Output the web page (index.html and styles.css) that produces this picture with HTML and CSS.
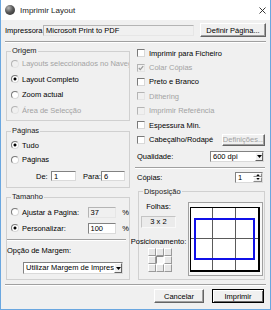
FILE: index.html
```html
<!DOCTYPE html>
<html lang="pt">
<head>
    <meta charset="UTF-8">
    <title>Imprimir Layout</title>
    <link rel="stylesheet" href="styles.css">
</head>
<body>
<div class="window">
    <!--barra de título-->
    <div class="titlebar">
        <span class="app-icon"></span>
        <span class="title">Imprimir Layout</span>
        <svg class="close" width="7" height="7" viewBox="0 0 7 7"><path d="M0.5 0.5L6.5 6.5M6.5 0.5L0.5 6.5" stroke="#222" stroke-width="0.9"/></svg>
    </div>

    <div class="content">
        <!--impressora-->
        <div class="printer-row">
            <span class="printer-label">Impressora</span>
            <span class="field off printer-name">Microsoft Print to PDF</span>
            <span class="btn setup-btn">Definir Página...</span>
        </div>
        <div class="sep"></div>

        <div class="columns">
            <!--coluna esquerda-->
            <div class="col-left">
                <fieldset class="group origem">
                    <legend>Origem</legend>
                    <div class="opt disabled"><span class="radio"></span>Layouts seleccionados no Navegador</div>
                    <div class="opt"><span class="radio on"></span>Layout Completo</div>
                    <div class="opt"><span class="radio"></span>Zoom actual</div>
                    <div class="opt disabled"><span class="radio"></span>Área de Selecção</div>
                </fieldset>

                <fieldset class="group paginas">
                    <legend>Páginas</legend>
                    <div class="opt"><span class="radio on"></span>Tudo</div>
                    <div class="opt"><span class="radio"></span>Páginas</div>
                    <div class="range-row">
                        <span class="range-label">De:</span>
                        <span class="field range-from">1</span>
                        <span class="range-label para">Para:</span>
                        <span class="field range-to">6</span>
                    </div>
                </fieldset>

                <fieldset class="group tamanho">
                    <legend>Tamanho</legend>
                    <div class="opt size-opt">
                        <span class="radio"></span><span class="size-label">Ajustar à Pagina:</span>
                        <span class="field off pct">37</span><span class="pct-sign">%</span>
                    </div>
                    <div class="opt size-opt">
                        <span class="radio on"></span><span class="size-label">Personalizar:</span>
                        <span class="field pct">100</span><span class="pct-sign">%</span>
                    </div>
                    <div class="sep inner-sep"></div>
                    <div class="margin-label">Opção de Margem:</div>
                    <div class="select margin-select">
                        <span class="select-val">Utilizar Margem de Impressora</span>
                        <span class="arrow"><svg width="5" height="3" viewBox="0 0 5 3"><polygon points="0,0 5,0 2.5,3" fill="#000"/></svg></span>
                    </div>
                </fieldset>
            </div>

            <!--coluna direita-->
            <div class="col-right">
                <div class="chk-row"><span class="check"></span>Imprimir para Ficheiro</div>
                <div class="chk-row disabled"><span class="check on"><svg width="6" height="6" viewBox="0 0 6 6"><path d="M0.8 3L2.3 4.6L5.2 1.2" stroke="#9a9a9a" stroke-width="1.2" fill="none"/></svg></span>Colar Cópias</div>
                <div class="chk-row"><span class="check"></span>Preto e Branco</div>
                <div class="chk-row disabled"><span class="check"></span>Dithering</div>
                <div class="chk-row disabled"><span class="check"></span>Imprimir Referência</div>
                <div class="chk-row"><span class="check"></span>Espessura Min.</div>
                <div class="chk-row"><span class="check"></span>Cabeçalho/Rodapé<span class="btn off defs-btn">Definições...</span></div>

                <div class="quality-row">
                    <span>Qualidade:</span>
                    <div class="select quality-select">
                        <span class="select-val">600 dpi</span>
                        <span class="arrow"><svg width="5" height="3" viewBox="0 0 5 3"><polygon points="0,0 5,0 2.5,3" fill="#000"/></svg></span>
                    </div>
                </div>
                <div class="sep right-sep"></div>

                <div class="copies-row">
                    <span>Cópias:</span>
                    <div class="spin">
                        <span class="spin-val">1</span>
                        <span class="spin-btns">
                            <span><svg width="5" height="3" viewBox="0 0 5 3"><polygon points="0,3 5,3 2.5,0" fill="#000"/></svg></span>
                            <span><svg width="5" height="3" viewBox="0 0 5 3"><polygon points="0,0 5,0 2.5,3" fill="#000"/></svg></span>
                        </span>
                    </div>
                </div>

                <fieldset class="group disposicao">
                    <legend>Disposição</legend>
                    <div class="layout">
                        <div class="layout-info">
                            <span class="sheets-label">Folhas:</span>
                            <span class="sheets-val">3 x 2</span>
                            <span class="pos-label">Posicionamento:</span>
                            <div class="pos-grid">
                                <span></span><span></span><span></span>
                                <span></span><span class="cur"></span><span></span>
                                <span></span><span></span><span></span>
                            </div>
                        </div>
                        <div class="preview">
                            <div class="page">
                                <span></span><span></span><span></span>
                                <span></span><span></span><span></span>
                                <div class="print-area"></div>
                            </div>
                        </div>
                    </div>
                </fieldset>
            </div>
        </div>

        <div class="sep bottom-sep"></div>
        <!--botões-->
        <div class="actions">
            <span class="btn action-btn">Cancelar</span>
            <span class="btn action-btn default">Imprimir</span>
        </div>
    </div>
</div>
</body>
</html>
```

FILE: styles.css
```css
*{
    margin: 0;
    padding: 0;
    box-sizing: border-box;
}
body{
    font-family: "Liberation Sans", Arial, sans-serif;
    font-size: 7.5px;
    color: #000;
    background: #fff;
}
.window{
    width: 271px;
    height: 310px;
    background: #f0f0f0;
    border: 1px solid #6aa7e0;
    border-top: none;
    display: flex;
    flex-direction: column;
}

/* barra de título */
.titlebar{
    height: 20px;
    background: #fff;
    display: flex;
    align-items: center;
    padding: 0 4px;
}
.app-icon{
    width: 10px;
    height: 10px;
    border-radius: 50%;
    background: radial-gradient(circle at 35% 30%, #b8b8b8 0, #5a5a5a 45%, #262626 100%);
    margin-top: -1px;
}
.title{
    font-size: 8px;
    margin-left: 5px;
    color: #1a1a1a;
}
.close{
    margin-left: auto;
}

.content{
    flex: 1;
    padding: 3px 4px 0 4px;
    display: flex;
    flex-direction: column;
}

/* controlos comuns */
.field{
    height: 11px;
    background: #fff;
    border: 1px solid;
    border-color: #828282 #dadada #dadada #828282;
    padding-left: 2px;
    line-height: 9px;
    white-space: nowrap;
    overflow: hidden;
}
.field.off{
    background: #f0f0f0;
    border-color: #b4b4b4 #e6e6e6 #e6e6e6 #b4b4b4;
}
.btn{
    display: flex;
    align-items: center;
    justify-content: center;
    background: #f0f0f0;
    border: 1px solid;
    border-color: #fff #646464 #646464 #fff;
    box-shadow: inset -1px -1px #a0a0a0;
    white-space: nowrap;
}
.btn.off{
    color: #a0a0a0;
}
.sep{
    border-top: 1px solid #a0a0a0;
    border-bottom: 1px solid #fff;
}
.select{
    height: 12px;
    display: flex;
    background: #fff;
    border: 1px solid;
    border-color: #828282 #dadada #dadada #828282;
}
.select-val{
    flex: 1;
    padding-left: 2px;
    line-height: 10px;
    white-space: nowrap;
    overflow: hidden;
}
.arrow{
    width: 8px;
    display: flex;
    align-items: center;
    justify-content: center;
    background: #f0f0f0;
    border: 1px solid;
    border-color: #fff #646464 #646464 #fff;
}

.radio{
    width: 8px;
    height: 8px;
    border-radius: 50%;
    background: #fff;
    border: 1px solid;
    border-color: #7a7a7a #d8d8d8 #d8d8d8 #7a7a7a;
    margin-right: 3px;
    flex: none;
}
.radio.on{
    background: radial-gradient(circle, #000 1.2px, #fff 1.8px);
}
.check{
    width: 8px;
    height: 8px;
    background: #fff;
    border: 1px solid;
    border-color: #7a7a7a #d8d8d8 #d8d8d8 #7a7a7a;
    margin-right: 4px;
    flex: none;
    display: flex;
    align-items: center;
    justify-content: center;
}
.disabled{
    color: #a3a3a3;
}
.disabled .radio,
.disabled .check{
    background-color: #f0f0f0;
    border-color: #b4b4b4 #e4e4e4 #e4e4e4 #b4b4b4;
}

/* linha da impressora */
.printer-row{
    height: 14px;
    display: flex;
    align-items: center;
}
.printer-label{
    width: 38px;
}
.printer-name{
    width: 151px;
}
.setup-btn{
    margin-left: auto;
    width: 66px;
    height: 14px;
}
.content > .sep{
    margin-top: 4px;
}

.columns{
    display: flex;
}
.col-left{
    width: 124px;
    margin-left: 1px;
    display: flex;
    flex-direction: column;
}
.col-right{
    flex: 1;
    margin-left: 5px;
    padding-top: 3px;
    display: flex;
    flex-direction: column;
}

/* caixas de grupo */
.group{
    border: 1px solid #d0d0d0;
    padding: 0 0 2px 0;
    min-width: 0;
}
.group legend{
    margin-left: 4px;
    padding: 0 1px;
    line-height: 10px;
    color: #1a1a1a;
}
.opt{
    height: 15.5px;
    display: flex;
    align-items: center;
    padding-left: 4px;
    white-space: nowrap;
    overflow: hidden;
}
.origem{
    margin-top: 3px;
}
.paginas{
    margin-top: 5px;
    padding: 2px 0 6px 0;
}
.paginas .opt{
    height: 14.5px;
}
.range-row{
    height: 10px;
    margin-top: 4px;
    display: flex;
    align-items: center;
    padding-left: 29px;
}
.range-label{
    width: 15px;
}
.range-label.para{
    width: 18px;
    margin-left: 7px;
}
.range-from{
    width: 25px;
    height: 10px;
}
.range-to{
    width: 24px;
    height: 10px;
}
.tamanho{
    margin-top: 4px;
    padding: 2px 0 5px 0;
}
.size-opt{
    height: 16px;
    overflow: visible;
}
.size-label{
    width: 66px;
}
.pct{
    width: 29px;
}
.pct-sign{
    margin-left: 6px;
}
.inner-sep{
    margin: 3px 3px 0 0;
}
.margin-label{
    height: 12px;
    line-height: 12px;
    margin-top: 4px;
}
.margin-select{
    width: 100px;
    margin: 5px 0 0 16px;
}

/* coluna direita */
.chk-row{
    height: 14.4px;
    display: flex;
    align-items: center;
    padding-left: 2px;
    white-space: nowrap;
}
.defs-btn{
    margin-left: auto;
    margin-right: 1px;
    width: 43px;
    height: 12px;
}
.quality-row,
.copies-row{
    height: 11px;
    display: flex;
    align-items: center;
    padding-left: 2px;
}
.quality-row{
    margin-top: 4px;
}
.quality-select{
    margin-left: auto;
    margin-right: 2px;
    width: 54px;
    height: 11px;
}
.quality-select .select-val{
    line-height: 9px;
}
.right-sep{
    margin: 5px 1px 0 0;
}
.copies-row{
    margin-top: 3px;
}
.spin{
    margin-left: auto;
    margin-right: 3px;
    width: 28px;
    height: 11px;
    display: flex;
    background: #fff;
    border: 1px solid;
    border-color: #828282 #dadada #dadada #828282;
}
.spin-val{
    flex: 1;
    padding-left: 2px;
    line-height: 9px;
}
.spin-btns{
    width: 9px;
    display: flex;
    flex-direction: column;
}
.spin-btns span{
    flex: 1;
    display: flex;
    align-items: center;
    justify-content: center;
    background: #f0f0f0;
    border: 1px solid;
    border-color: #fff #8a8a8a #8a8a8a #fff;
}
.spin-btns svg{
    width: 4px;
    height: 2px;
}

.disposicao{
    flex: 1;
    margin: 4px 1px 0 3px;
    padding: 0;
}
.layout{
    display: flex;
    padding: 5px 1px 0 2px;
}
.layout-info{
    width: 35px;
    display: flex;
    flex-direction: column;
    align-items: center;
}
.sheets-label{
    line-height: 10px;
}
.sheets-val{
    width: 35px;
    height: 12px;
    margin-top: 4px;
    background: #ebebeb;
    border: 1px solid;
    border-color: #c4c4c4 #f8f8f8 #f8f8f8 #c4c4c4;
    display: flex;
    align-items: center;
    justify-content: center;
}
.pos-label{
    line-height: 10px;
    margin-top: 9px;
    white-space: nowrap;
}
.pos-grid{
    margin-top: 1px;
    margin-left: 3px;
    display: grid;
    grid-template-columns: repeat(3, 8px);
    grid-template-rows: repeat(3, 8px);
}
.pos-grid span{
    background: #e8e8e8;
    border: 1px solid;
    border-color: #fff #9a9a9a #9a9a9a #fff;
}
.pos-grid .cur{
    background: #f8f8f8;
    border-color: #8a8a8a #fff #fff #8a8a8a;
}
.preview{
    margin-left: auto;
    width: 75px;
    height: 74px;
    background: #f8f8f8;
    border: 1px solid;
    border-color: #a0a0a0 #a0a0a0 #a0a0a0 #a0a0a0;
    padding: 4px 1px 2px 1px;
}
.page{
    position: relative;
    width: 70px;
    height: 65px;
    background: #fff;
    border: solid #000;
    border-width: 1px 2px 2px 1px;
    display: grid;
    grid-template-columns: 22px 23px 22px;
    grid-template-rows: 31px 31px;
}
.page span{
    border-right: 1px solid #5a5a5a;
    border-bottom: 1px solid #5a5a5a;
}
.page span:nth-child(3n){
    border-right: none;
}
.page span:nth-child(n+4){
    border-bottom: none;
}
.print-area{
    position: absolute;
    left: 3px;
    top: 10px;
    width: 61px;
    height: 42px;
    border: 2px solid #1010e8;
}

/* botões finais */
.bottom-sep{
    margin-top: 5px;
}
.actions{
    display: flex;
    justify-content: flex-end;
    gap: 8px;
    margin: 3px 2px 0 0;
}
.action-btn{
    width: 50px;
    height: 14px;
}
.action-btn.default{
    width: 52px;
    border-color: #000;
    box-shadow: inset 1px 1px #fff, inset -1px -1px #6a6a6a;
}
```
